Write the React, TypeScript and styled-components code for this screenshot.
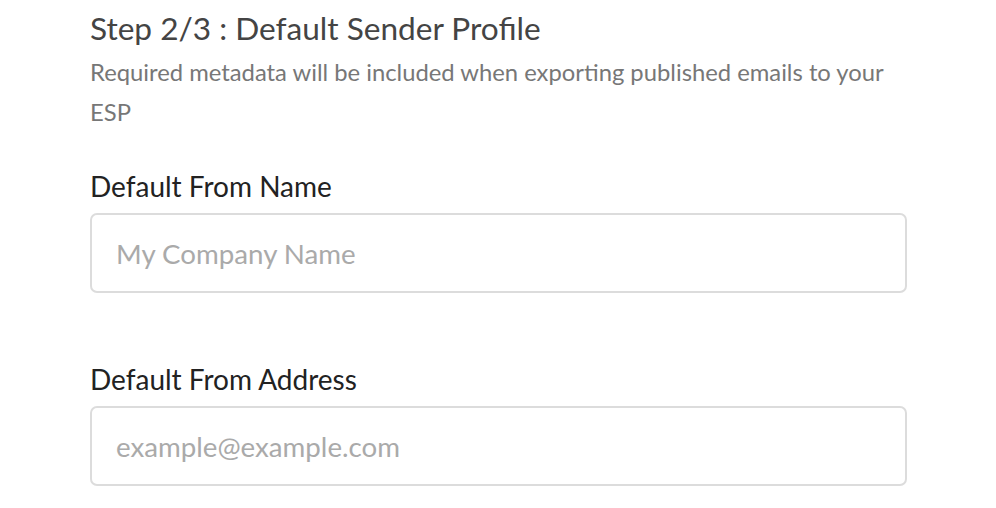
import React from "react";
import styled, { createGlobalStyle } from "styled-components";

const Global = createGlobalStyle`
  html, body { margin: 0; padding: 0; background: #fff; }
  body { font-family: Lato, "Open Sans", sans-serif; }
  * { box-sizing: border-box; }
`;

const Page = styled.div`
  padding: 8px 0 0 90px;
  width: 907px;
  display: flex;
  flex-direction: column;
`;

const Title = styled.h2`
  margin: 0;
  font-size: 31.6px;
  font-weight: 400;
  line-height: 40px;
  color: #444;
`;

const Subtitle = styled.p`
  margin: 4px 0 0;
  font-size: 23.8px;
  line-height: 40px;
  color: #777;
`;

const Field = styled.div<{ $gap: number }>`
  display: flex;
  flex-direction: column;
  margin-top: ${(p) => p.$gap}px;
`;

const Label = styled.label`
  font-size: 28px;
  line-height: 36px;
  color: #222;
  margin-bottom: 9px;
`;

const Input = styled.input`
  height: 80px;
  width: 100%;
  border: 2px solid #dcdcdc;
  border-radius: 7px;
  padding: 0 24px;
  font-family: Lato, "Open Sans", sans-serif;
  font-size: 27.7px;
  color: #333;
  outline: none;
  &::placeholder { color: #aaa; }
`;

export default function App() {
  return (
    <>
      <Global />
      <Page>
        <Title>Step 2/3 : Default Sender Profile</Title>
        <Subtitle>
          Required metadata will be included when exporting published emails to your ESP
        </Subtitle>
        <Field $gap={36}>
          <Label>Default From Name</Label>
          <Input placeholder="My Company Name" />
        </Field>
        <Field $gap={68}>
          <Label>Default From Address</Label>
          <Input placeholder="example@example.com" />
        </Field>
      </Page>
    </>
  );
}
